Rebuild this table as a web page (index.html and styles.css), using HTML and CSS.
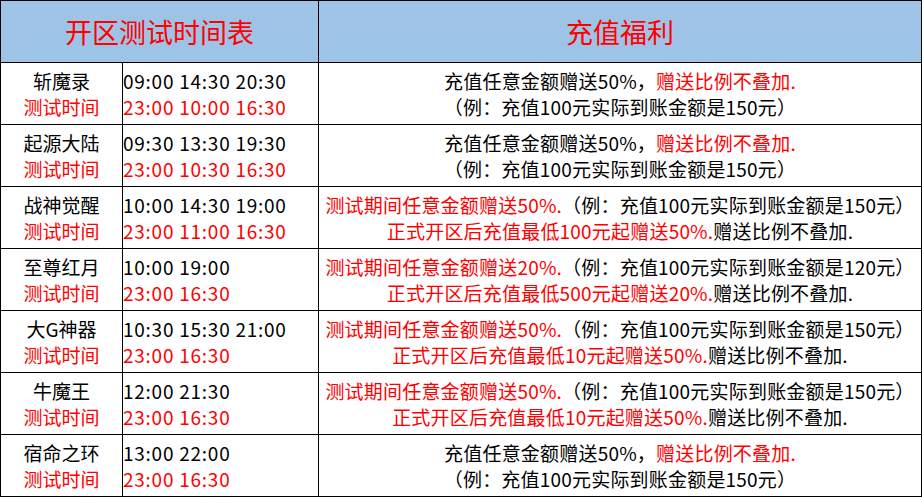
FILE: index.html
```html
<!DOCTYPE html>
<html lang="zh-CN">
<head>
<meta charset="utf-8">
<link rel="stylesheet" href="styles.css">
</head>
<body>
<table class="sheet">
  <colgroup>
    <col class="c-name">
    <col class="c-time">
    <col class="c-bonus">
  </colgroup>
  <thead>
    <tr>
      <th colspan="2">开区测试时间表</th>
      <th>充值福利</th>
    </tr>
  </thead>
  <tbody>
    <tr>
      <td class="name">斩魔录<br><span class="red">测试时间</span></td>
      <td class="time">09:00 14:30 20:30<br><span class="red">23:00 10:00 16:30</span></td>
      <td class="bonus">充值任意金额赠送50%，<span class="red">赠送比例不叠加.</span><br>（例：充值100元实际到账金额是150元）</td>
    </tr>
    <tr>
      <td class="name">起源大陆<br><span class="red">测试时间</span></td>
      <td class="time">09:30 13:30 19:30<br><span class="red">23:00 10:30 16:30</span></td>
      <td class="bonus">充值任意金额赠送50%，<span class="red">赠送比例不叠加.</span><br>（例：充值100元实际到账金额是150元）</td>
    </tr>
    <tr>
      <td class="name">战神觉醒<br><span class="red">测试时间</span></td>
      <td class="time">10:00 14:30 19:00<br><span class="red">23:00 11:00 16:30</span></td>
      <td class="bonus"><span class="red">测试期间任意金额赠送50%.</span>（例：充值100元实际到账金额是150元）<br><span class="red">正式开区后充值最低100元起赠送50%.</span>赠送比例不叠加.</td>
    </tr>
    <tr>
      <td class="name">至尊红月<br><span class="red">测试时间</span></td>
      <td class="time">10:00 19:00<br><span class="red">23:00 16:30</span></td>
      <td class="bonus"><span class="red">测试期间任意金额赠送20%.</span>（例：充值100元实际到账金额是120元）<br><span class="red">正式开区后充值最低500元起赠送20%.</span>赠送比例不叠加.</td>
    </tr>
    <tr>
      <td class="name">大G神器<br><span class="red">测试时间</span></td>
      <td class="time">10:30 15:30 21:00<br><span class="red">23:00 16:30</span></td>
      <td class="bonus"><span class="red">测试期间任意金额赠送50%.</span>（例：充值100元实际到账金额是150元）<br><span class="red">正式开区后充值最低10元起赠送50%.</span>赠送比例不叠加.</td>
    </tr>
    <tr>
      <td class="name">牛魔王<br><span class="red">测试时间</span></td>
      <td class="time">12:00 21:30<br><span class="red">23:00 16:30</span></td>
      <td class="bonus"><span class="red">测试期间任意金额赠送50%.</span>（例：充值100元实际到账金额是150元）<br><span class="red">正式开区后充值最低10元起赠送50%.</span>赠送比例不叠加.</td>
    </tr>
    <tr>
      <td class="name">宿命之环<br><span class="red">测试时间</span></td>
      <td class="time">13:00 22:00<br><span class="red">23:00 16:30</span></td>
      <td class="bonus">充值任意金额赠送50%，<span class="red">赠送比例不叠加.</span><br>（例：充值100元实际到账金额是150元）</td>
    </tr>
  </tbody>
</table>
</body>
</html>
```

FILE: styles.css
```css
html, body {
  margin: 0;
  padding: 0;
  background: #ffffff;
}
body {
  font-family: "Noto Sans CJK SC", "Noto Sans", sans-serif;
  color: #000000;
}
.sheet {
  border-collapse: collapse;
  table-layout: fixed;
  width: 921px;
}
.c-name { width: 122px; }
.c-time { width: 196px; }
.c-bonus { width: 603px; }
.sheet th,
.sheet td {
  border: 1px solid #000000;
  padding: 0;
  height: 62px;
  box-sizing: border-box;
  vertical-align: middle;
}
.sheet th {
  background: #9dc3e6;
  color: #ff0000;
  font-weight: normal;
  font-size: 27px;
  line-height: 32px;
  text-align: center;
}
.sheet td {
  font-size: 19px;
  line-height: 26px;
}
.name { text-align: center; }
.time {
  text-align: left;
  padding-left: 5px;
  letter-spacing: 0.75px;
}
.bonus {
  text-align: center;
  letter-spacing: 0.2px;
}
.red { color: #ff0000; }
```
